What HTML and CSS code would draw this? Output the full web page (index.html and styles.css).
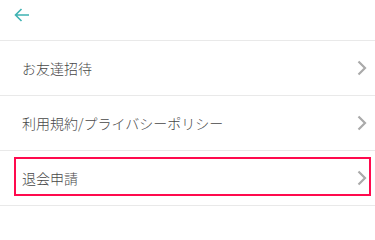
FILE: index.html
```html
<!DOCTYPE html>
<html lang="ja">
<head>
<meta charset="utf-8">
<link rel="stylesheet" href="styles.css">
</head>
<body>
<header class="bar">
  <svg class="back" width="16" height="14" viewBox="0 0 16 14"><path d="M15 7H1.5M7.5 1L1.5 7l6 6" fill="none" stroke="#3fb3b3" stroke-width="1.6"/></svg>
</header>
<ul class="menu">
  <li class="row"><span class="label">お友達招待</span><svg class="chev" width="10" height="16" viewBox="0 0 10 16"><path d="M1.5 1.5L8 8l-6.5 6.5" fill="none" stroke="#aaa" stroke-width="2.2"/></svg></li>
  <li class="row"><span class="label">利用規約/プライバシーポリシー</span><svg class="chev" width="10" height="16" viewBox="0 0 10 16"><path d="M1.5 1.5L8 8l-6.5 6.5" fill="none" stroke="#aaa" stroke-width="2.2"/></svg></li>
  <li class="row highlight"><span class="label">退会申請</span><svg class="chev" width="10" height="16" viewBox="0 0 10 16"><path d="M1.5 1.5L8 8l-6.5 6.5" fill="none" stroke="#aaa" stroke-width="2.2"/></svg><span class="mark"></span></li>
</ul>
</body>
</html>
```
FILE: styles.css
```css
* { box-sizing: border-box; }
html, body { margin: 0; padding: 0; background: #fff; }
body { font-family: "Noto Sans CJK JP", "Noto Sans", sans-serif; color: #474747; }
.bar {
  height: 41px;
  border-bottom: 1px solid #e9e9e9;
  display: flex;
  align-items: flex-start;
  padding: 8px 0 0 14px;
}
.back { display: block; }
.menu { list-style: none; margin: 0; padding: 0; }
.row {
  position: relative;
  height: 55px;
  border-bottom: 1px solid #e9e9e9;
  display: flex;
  align-items: center;
  justify-content: space-between;
  padding: 0 8px 0 22px;
  font-size: 14px;
  font-weight: 300;
}
.label { line-height: 20px; }
.chev { display: block; }
.mark {
  position: absolute;
  left: 14px;
  top: 6px;
  width: 357px;
  height: 39px;
  border: 2px solid #ff0a4e;
  pointer-events: none;
}
```
